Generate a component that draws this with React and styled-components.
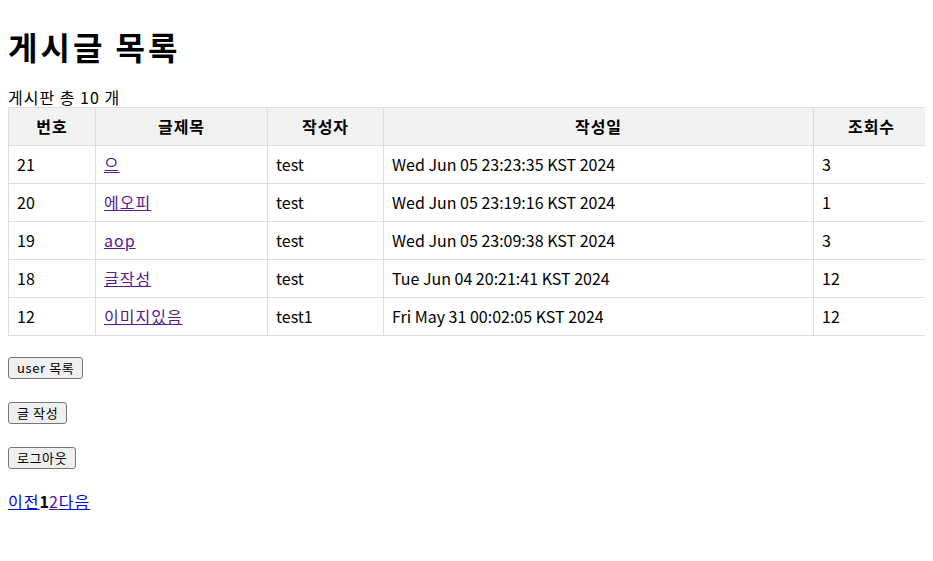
import styled, { createGlobalStyle } from 'styled-components';

const GlobalStyle = createGlobalStyle`
	body {
		margin: 8px;
		font-family: 'Noto Sans CJK KR', 'Noto Sans', sans-serif;
		color: #000;
		background: #fff;
	}
`;

const posts = [
	{ id: 21, title: '으', writer: 'test', date: 'Wed Jun 05 23:23:35 KST 2024', views: 3 },
	{ id: 20, title: '에오피', writer: 'test', date: 'Wed Jun 05 23:19:16 KST 2024', views: 1 },
	{ id: 19, title: 'aop', writer: 'test', date: 'Wed Jun 05 23:09:38 KST 2024', views: 3 },
	{ id: 18, title: '글작성', writer: 'test', date: 'Tue Jun 04 20:21:41 KST 2024', views: 12 },
	{ id: 12, title: '이미지있음', writer: 'test1', date: 'Fri May 31 00:02:05 KST 2024', views: 12 },
];

const Title = styled.h1`
	font-size: 32px;
	font-weight: 700;
	line-height: 38px;
	letter-spacing: 3px;
	margin: 19px 0 23px;
`;

const Count = styled.div`
	font-size: 16px;
	line-height: 19px;
	letter-spacing: 1px;
`;

const Table = styled.table`
	width: 921px;
	border-collapse: collapse;
	table-layout: fixed;
	font-size: 16px;
`;

const Th = styled.th`
	border: 1px solid #ddd;
	background: #f2f2f2;
	padding: 8px;
	line-height: 21px;
	font-weight: 700;
	letter-spacing: 1px;
	text-align: center;
`;

const Td = styled.td`
	border: 1px solid #ddd;
	padding: 8px;
	line-height: 21px;
	text-align: left;
	white-space: nowrap;
`;

const PostLink = styled.a`
	color: ${({ $visited }) => ($visited ? '#551a8b' : '#0000ee')};
	text-decoration: underline;
	letter-spacing: 1px;
	cursor: pointer;
`;

const Actions = styled.div`
	display: flex;
	flex-direction: column;
	align-items: flex-start;
	gap: 23px;
	margin-top: 21px;
`;

const Button = styled.button`
	font-family: 'Noto Sans CJK KR', 'Noto Sans', sans-serif;
	font-size: 13px;
	line-height: 18px;
	letter-spacing: 0.6px;
	height: 22px;
	padding: 1px 8px;
	border: 1px solid #767676;
	border-radius: 3px;
	background: #efefef;
	color: #000;
`;

const Pager = styled.div`
	margin-top: 22px;
	font-size: 16px;
	line-height: 21px;
`;

const Current = styled.b`
	font-weight: 700;
`;

export default function App() {
	return (
		<>
			<GlobalStyle />
			<Title>게시글 목록</Title>
			<Count>게시판 총 10 개</Count>
			<Table>
				<colgroup>
					<col style={{ width: 87 }} />
					<col style={{ width: 172 }} />
					<col style={{ width: 116 }} />
					<col style={{ width: 430 }} />
					<col style={{ width: 116 }} />
				</colgroup>
				<thead>
					<tr>
						<Th>번호</Th>
						<Th>글제목</Th>
						<Th>작성자</Th>
						<Th>작성일</Th>
						<Th>조회수</Th>
					</tr>
				</thead>
				<tbody>
					{posts.map(({ id, title, writer, date, views }) => (
						<tr key={id}>
							<Td>{id}</Td>
							<Td>
								<PostLink $visited>{title}</PostLink>
							</Td>
							<Td>{writer}</Td>
							<Td>{date}</Td>
							<Td>{views}</Td>
						</tr>
					))}
				</tbody>
			</Table>
			<Actions>
				<Button>user 목록</Button>
				<Button>글 작성</Button>
				<Button>로그아웃</Button>
			</Actions>
			<Pager>
				<PostLink>이전</PostLink>
				<Current>1</Current>
				<PostLink $visited>2</PostLink>
				<PostLink>다음</PostLink>
			</Pager>
		</>
	);
}
